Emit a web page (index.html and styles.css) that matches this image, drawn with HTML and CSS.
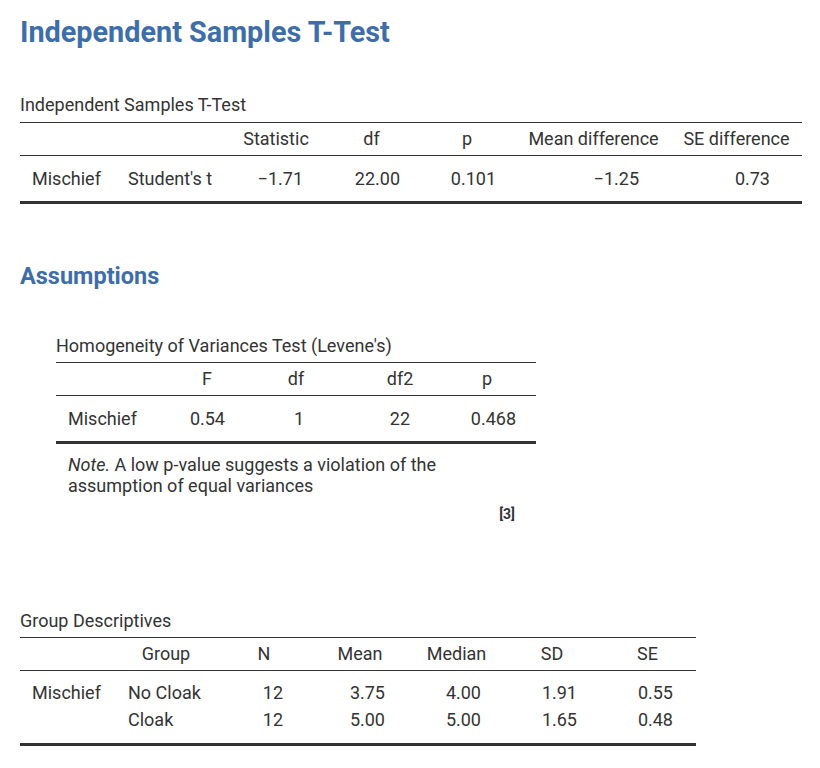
FILE: index.html
```html
<!DOCTYPE html>
<html lang="en">
<head>
<meta charset="utf-8">
<title>Independent Samples T-Test</title>
<link rel="stylesheet" href="styles.css">
</head>
<body>
<h1 class="title">Independent Samples T-Test</h1>

<table class="res t1">
  <caption>Independent Samples T-Test</caption>
  <colgroup>
    <col class="w96"><col class="w111"><col class="w98"><col class="w93"><col class="w98"><col class="w155"><col class="w131">
  </colgroup>
  <thead>
    <tr><th></th><th></th><th>Statistic</th><th>df</th><th>p</th><th>Mean difference</th><th>SE difference</th></tr>
  </thead>
  <tbody>
    <tr><td class="txt">Mischief</td><td class="txt">Student's t</td><td>−1.71</td><td>22.00</td><td>0.101</td><td>−1.25</td><td>0.73</td></tr>
  </tbody>
</table>

<h2 class="heading">Assumptions</h2>

<div class="indent">
  <table class="res t2">
    <caption>Homogeneity of Variances Test (Levene's)</caption>
    <colgroup>
      <col class="w104"><col class="w94"><col class="w84"><col class="w124"><col class="w74">
    </colgroup>
    <thead>
      <tr><th></th><th>F</th><th>df</th><th>df2</th><th>p</th></tr>
    </thead>
    <tbody>
      <tr><td class="txt">Mischief</td><td>0.54</td><td>1</td><td>22</td><td>0.468</td></tr>
    </tbody>
  </table>
  <p class="note"><em class="note-lead">Note.</em> A low p-value suggests a violation of the assumption of equal variances</p>
  <p class="ref">[3]</p>
</div>

<table class="res t3">
  <caption>Group Descriptives</caption>
  <colgroup>
    <col class="w96"><col class="w100"><col class="w96"><col class="w96"><col class="w97"><col class="w94"><col class="w97">
  </colgroup>
  <thead>
    <tr><th></th><th>Group</th><th>N</th><th>Mean</th><th>Median</th><th>SD</th><th>SE</th></tr>
  </thead>
  <tbody>
    <tr><td class="txt">Mischief</td><td class="txt">No Cloak</td><td>12</td><td>3.75</td><td>4.00</td><td>1.91</td><td>0.55</td></tr>
    <tr><td class="txt"></td><td class="txt">Cloak</td><td>12</td><td>5.00</td><td>5.00</td><td>1.65</td><td>0.48</td></tr>
  </tbody>
</table>
</body>
</html>
```

FILE: styles.css
```css
* { box-sizing: border-box; }

body {
  margin: 0;
  padding: 0 18px 0 20px;
  font-family: Roboto, "Noto Sans", "Liberation Sans", sans-serif;
  color: #333333;
  background: #ffffff;
}

.title {
  margin: 15px 0 0;
  font-size: 28.8px;
  line-height: 34px;
  font-weight: 700;
  color: #3e6ea9;
}

.heading {
  margin: 57px 0 0;
  font-size: 23.5px;
  line-height: 30px;
  font-weight: 700;
  color: #3e6ea9;
}

.res {
  border-collapse: collapse;
  table-layout: fixed;
  font-size: 18px;
}

.res caption {
  caption-side: top;
  text-align: left;
  white-space: nowrap;
  line-height: 20px;
  padding-bottom: 7px;
}

.res thead th {
  font-weight: 400;
  text-align: center;
  line-height: 20px;
  padding: 6px 0;
  border-top: 1px solid #333333;
  border-bottom: 1px solid #333333;
  white-space: nowrap;
}

.res tbody {
  border-bottom: 3px solid #333333;
}

.res tbody td {
  line-height: 20px;
  padding: 3.5px 0;
  text-align: right;
  white-space: nowrap;
}

.res tbody tr:first-child td { padding-top: 13px; }
.res tbody tr:last-child td { padding-bottom: 12px; }

.res tbody td.txt {
  text-align: left;
  padding-left: 12px;
}

/* column widths */
.w74 { width: 74px; }
.w84 { width: 84px; }
.w93 { width: 93px; }
.w94 { width: 94px; }
.w96 { width: 96px; }
.w97 { width: 97px; }
.w98 { width: 98px; }
.w100 { width: 100px; }
.w104 { width: 104px; }
.w111 { width: 111px; }
.w124 { width: 124px; }
.w131 { width: 131px; }
.w155 { width: 155px; }

/* table 1 */
.t1 { width: 782px; margin-top: 46px; }
.t1 tbody td:nth-child(3) { padding-right: 22px; }
.t1 tbody td:nth-child(4) { padding-right: 18px; }
.t1 tbody td:nth-child(5) { padding-right: 20px; }
.t1 tbody td:nth-child(6) { padding-right: 32px; }
.t1 tbody td:nth-child(7) { padding-right: 32px; }

/* table 2 */
.indent {
  margin-left: 36px;
  width: 480px;
}
.t2 { width: 480px; margin-top: 45px; }
.t2 caption { padding-bottom: 6px; }
.t2 thead th:nth-child(5) { padding-right: 24px; }
.t2 tbody td:nth-child(2) { padding-right: 29px; }
.t2 tbody td:nth-child(3) { padding-right: 34px; }
.t2 tbody td:nth-child(4) { padding-right: 52px; }
.t2 tbody td:nth-child(5) { padding-right: 20px; }

.note {
  margin: 10px 0 0;
  padding: 0 12px;
  font-size: 18px;
  line-height: 21px;
}

.ref {
  margin: 10px 0 0;
  padding-right: 21px;
  text-align: right;
  font-size: 14px;
  line-height: 16px;
  font-weight: 700;
}

/* table 3 */
.t3 { width: 676px; margin-top: 89px; }
.t3 caption { padding-bottom: 6px; }
.t3 tbody tr:first-child td { padding-top: 12px; }
.t3 tbody tr:last-child td { padding-bottom: 13px; }
.t3 tbody td:nth-child(3) { padding-right: 29px; }
.t3 tbody td:nth-child(4) { padding-right: 23px; }
.t3 tbody td:nth-child(5) { padding-right: 24px; }
.t3 tbody td:nth-child(6) { padding-right: 22px; }
.t3 tbody td:nth-child(7) { padding-right: 23px; }
```
